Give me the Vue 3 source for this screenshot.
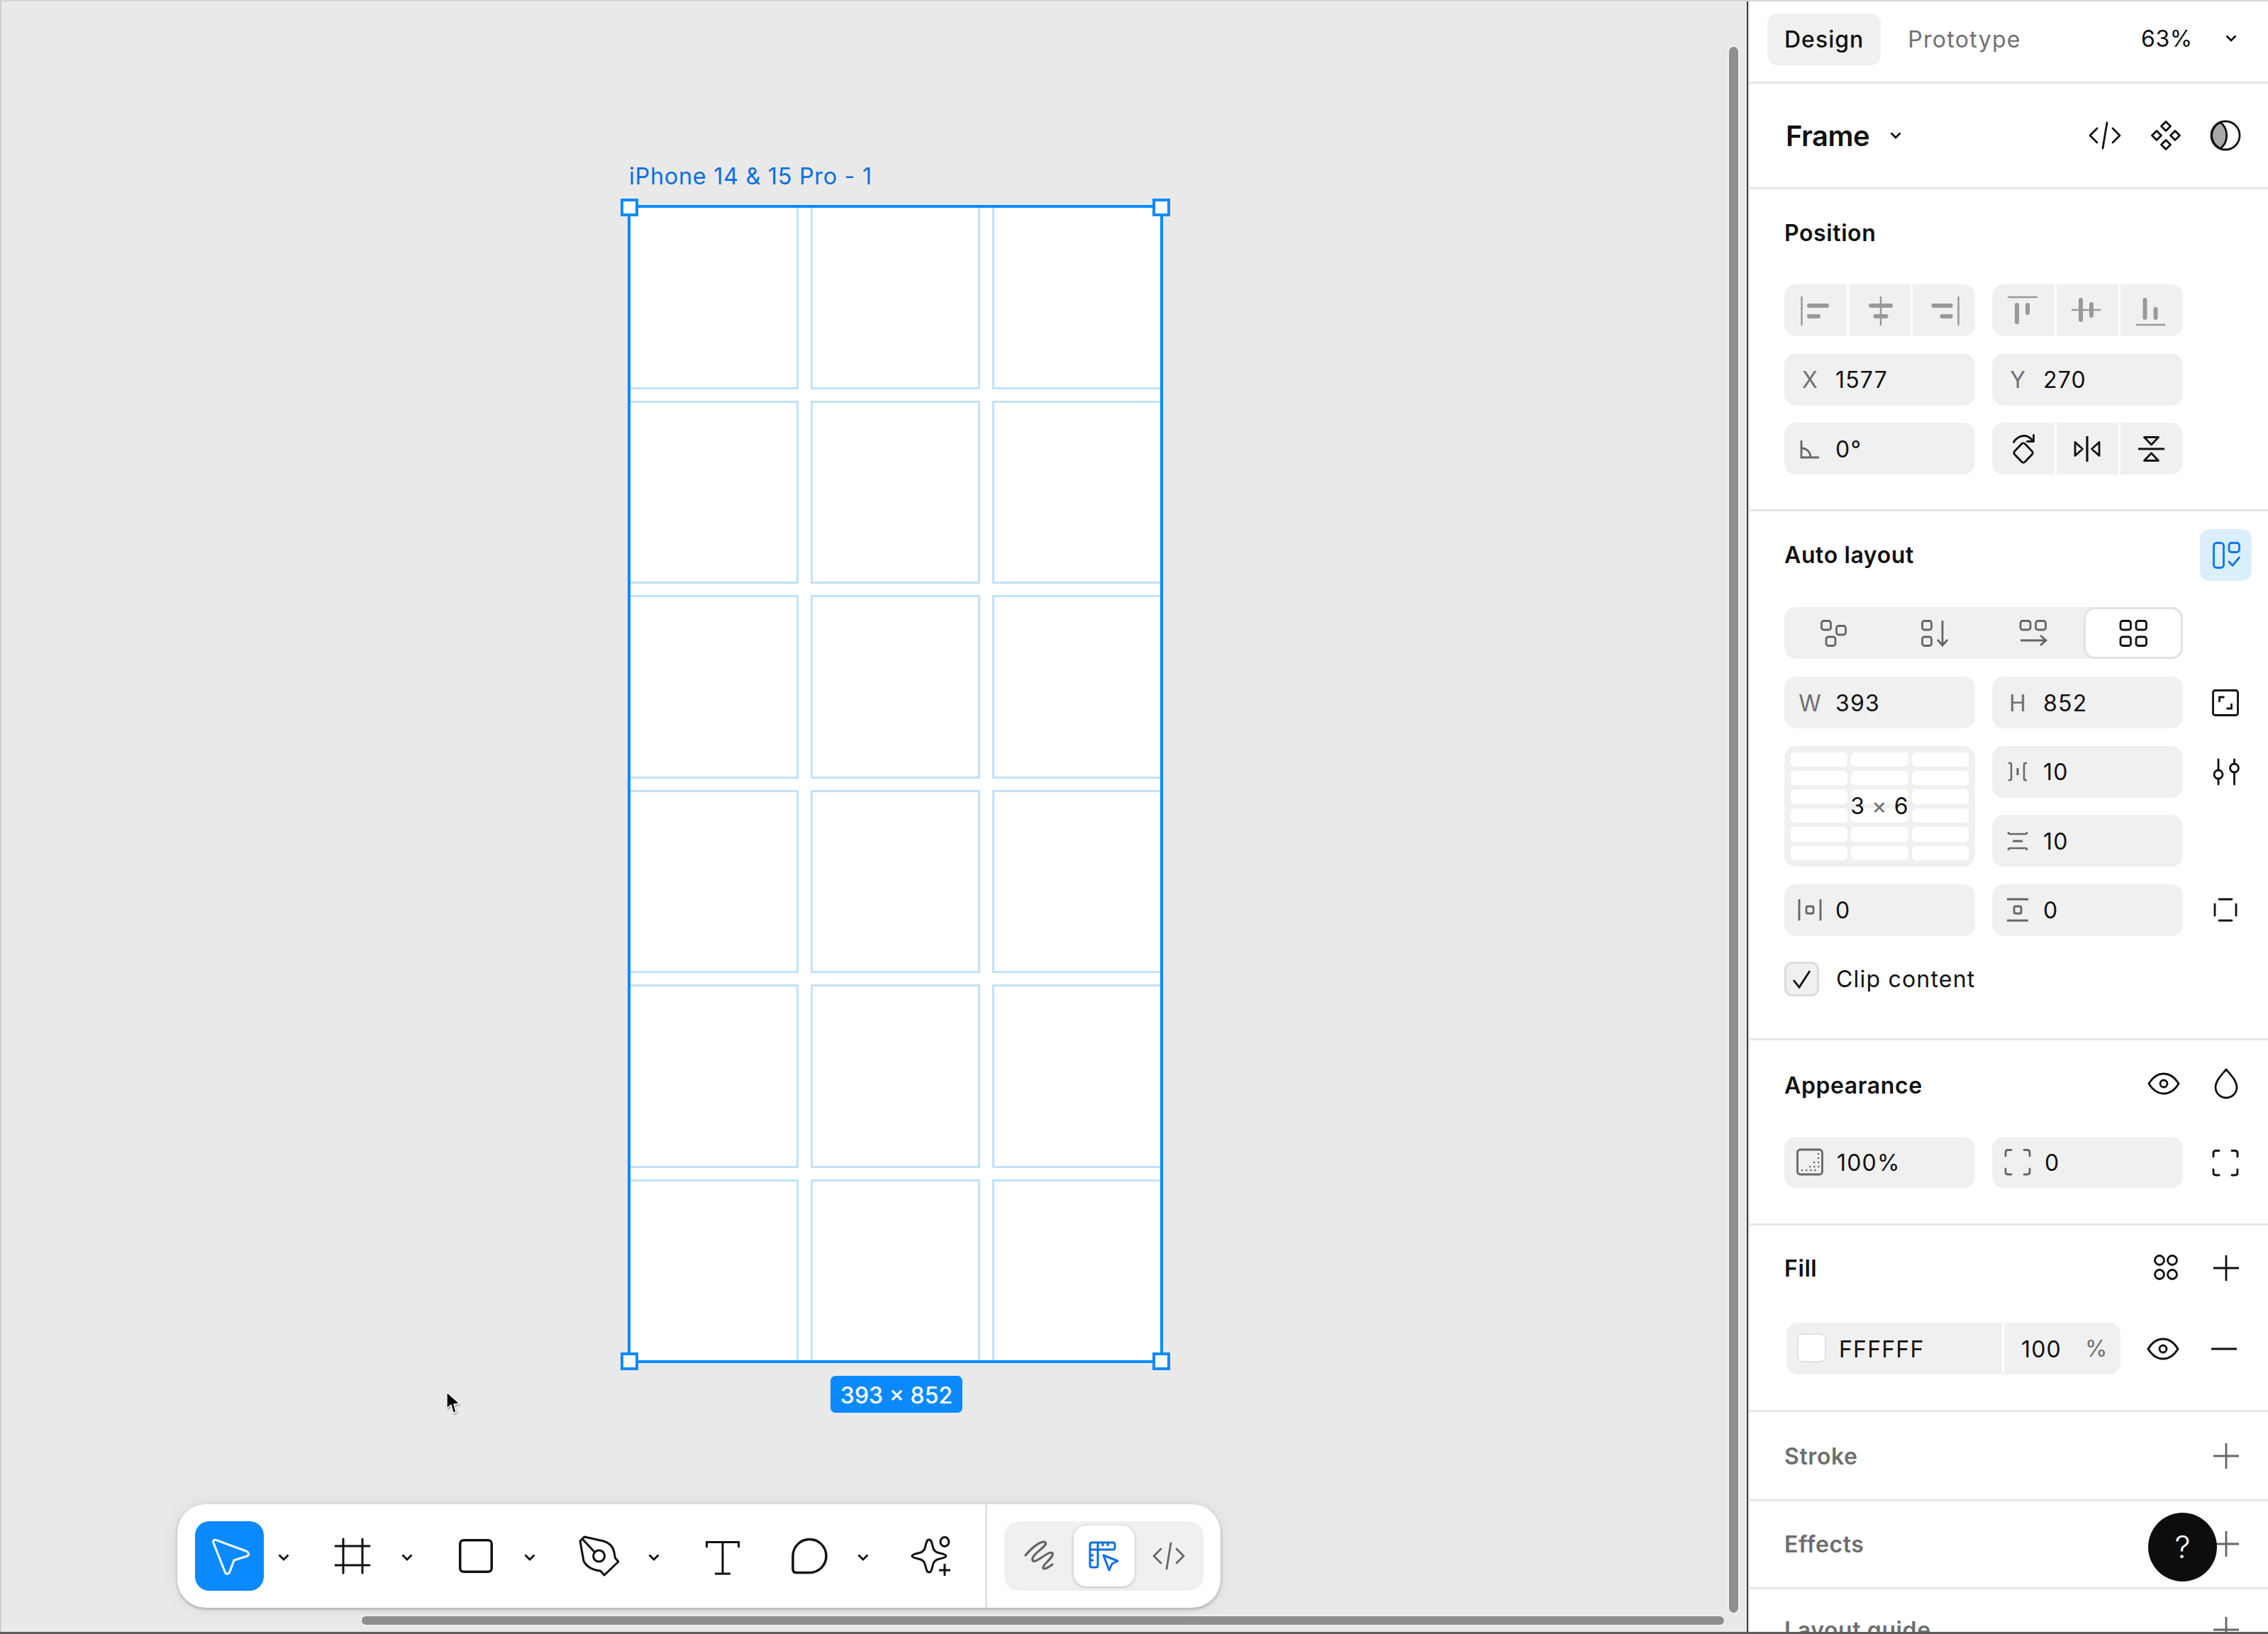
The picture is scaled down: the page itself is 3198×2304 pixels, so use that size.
<script setup>
const cells = Array.from({ length: 18 }, (_, i) => i)
</script>

<template>
  <div class="page">
    <main class="canvas">
      <div class="frame">
        <div class="frame-label">iPhone 14 &amp; 15 Pro - 1</div>
        <div class="frame-grid">
          <div v-for="c in cells" :key="c" class="frame-cell"></div>
        </div>
        <i class="handle tl"></i><i class="handle tr"></i><i class="handle bl"></i><i class="handle br"></i>
        <div class="badge">393 × 852</div>
      </div>

      <svg class="mouse" viewBox="0 0 24 34" width="24" height="34">
        <path d="M2 2 L2 25 L8 20 L11 31 L15 30 L12 19 L20 18 Z" fill="#000" stroke="#fff" stroke-width="1.4" stroke-linejoin="round" />
      </svg>

      <div class="scroll-v"></div>
      <div class="scroll-h"></div>

      <div class="toolbar">
        <div class="tools">
          <button class="tool-active">
            <svg viewBox="0 0 60 60" width="60" height="60" fill="none" stroke="#fff" stroke-width="3" stroke-linejoin="round">
              <path d="M6.8 11 Q6 6 11 7.6 L54 23.5 Q59 27 55 30 L36 36 L29.6 53 Q26.5 57 23.8 54 Z" />
            </svg>
          </button>
          <svg class="tb-chev" viewBox="0 0 16 10" width="16" height="10"><path d="M1.5 1.5 L8 8 L14.5 1.5" /></svg>
          <svg class="tb-ic ic-frame" viewBox="0 0 48 48" width="48" height="48" fill="none" stroke="#111" stroke-width="3" stroke-linecap="round">
            <path d="M11 0 V48 M38 0 V48 M0 10 H48 M0 37 H48" />
          </svg>
          <svg class="tb-chev c2" viewBox="0 0 16 10" width="16" height="10"><path d="M1.5 1.5 L8 8 L14.5 1.5" /></svg>
          <svg class="tb-ic ic-rect" viewBox="0 0 48 48" width="48" height="48" fill="none" stroke="#111" stroke-width="3.5">
            <rect x="1.75" y="1.75" width="44.5" height="44.5" rx="5" />
          </svg>
          <svg class="tb-chev c3" viewBox="0 0 16 10" width="16" height="10"><path d="M1.5 1.5 L8 8 L14.5 1.5" /></svg>
          <svg class="tb-ic ic-pen" viewBox="0 0 60 60" width="60" height="60" fill="none" stroke="#111" stroke-width="3" stroke-linejoin="round">
            <path d="M9 2 L36 8 Q49 12 51 24 L52.5 32 L57 37 L37 56 L31.6 50 Q14 48 8 36 L3 8 Z" />
            <path d="M7 6 L23 23" />
            <circle cx="29.6" cy="29" r="8" />
          </svg>
          <svg class="tb-chev c4" viewBox="0 0 16 10" width="16" height="10"><path d="M1.5 1.5 L8 8 L14.5 1.5" /></svg>
          <svg class="tb-ic ic-text" viewBox="0 0 48 48" width="48" height="48" fill="none" stroke="#111" stroke-width="3">
            <path d="M1.5 9 V1.5 H46.5 V9 M24 1.5 V46 M13 46 H35" />
          </svg>
          <svg class="tb-ic ic-comment" viewBox="0 0 52 52" width="52" height="52" fill="none" stroke="#111" stroke-width="3.5">
            <path d="M3 26 A23.5 23.5 0 1 1 26.5 49.5 H8 Q3 49.5 3 44.5 Z" />
          </svg>
          <svg class="tb-chev c5" viewBox="0 0 16 10" width="16" height="10"><path d="M1.5 1.5 L8 8 L14.5 1.5" /></svg>
          <svg class="tb-ic ic-spark" viewBox="0 0 60 60" width="60" height="60" fill="none" stroke="#111" stroke-width="3">
            <path d="M28 6 C31 6 32 10 33 15 C34 21 37 24 43 25 C48 26 52 27 52 29 C52 31 48 32 43 33 C37 34 34 37 33 43 C32 48 31 52 28 52 C25 52 24 48 23 43 C22 37 19 34 13 33 C8 32 4 31 4 29 C4 27 8 26 13 25 C19 24 22 21 23 15 C24 10 25 6 28 6 Z" />
            <ellipse cx="50" cy="9" rx="6" ry="6.5" />
            <path d="M50 40 V57 M42 49 H58" />
          </svg>
        </div>
        <div class="modes">
          <span class="mode">
            <svg viewBox="0 0 48 48" width="48" height="48" fill="none" stroke="#666" stroke-width="3.2" stroke-linecap="round">
              <path d="M5 23 C14 12 28 1 33 5 C38 9 12 22 15 30 C18 37 38 15 43 20 C46 25 28 37 30 41 C32 44 40 38 43 36" />
            </svg>
          </span>
          <span class="mode mode-on">
            <svg viewBox="0 0 48 48" width="48" height="48" fill="none" stroke="#0b6fe3" stroke-width="3" stroke-linejoin="round">
              <path d="M4 8 Q4 5 7 5 H36 Q39 5 39 8 V12 Q39 15 36 15 H15 V37 Q15 40 12 40 H7 Q4 40 4 37 Z" />
              <path d="M4 15 H15 V5 M22 5 V10 M29 5 V10 M4 23 H9 M4 30 H9" />
              <path d="M23 23 L43 31 L35 35 L31 44 Z" fill="#fff" />
            </svg>
          </span>
          <span class="mode">
            <svg viewBox="0 0 48 48" width="48" height="48" fill="none" stroke="#666" stroke-width="2.8" stroke-linecap="round" stroke-linejoin="round">
              <path d="M13 14 L3 24 L13 34 M35 14 L45 24 L35 34 M27 6 L21 42" />
            </svg>
          </span>
        </div>
      </div>
    </main>

    <aside class="panel">
      <section class="sec tabs">
        <span class="tab tab-on">Design</span>
        <span class="tab">Prototype</span>
        <span class="zoom-val">63%</span>
        <svg class="chev" viewBox="0 0 16 10" width="16" height="10"><path d="M1.5 1.5 L8 8 L14.5 1.5" /></svg>
      </section>

      <section class="sec header">
        <span class="frame-name">Frame</span>
        <svg class="chev" viewBox="0 0 16 10" width="16" height="10"><path d="M1.5 1.5 L8 8 L14.5 1.5" /></svg>
        <span class="spacer"></span>
        <svg viewBox="0 0 48 48" width="48" height="48" fill="none" stroke="#111" stroke-width="2.8" stroke-linecap="round" stroke-linejoin="round">
          <path d="M13 14 L3 24 L13 34 M35 14 L45 24 L35 34 M27 6 L21 42" />
        </svg>
        <svg viewBox="0 0 48 48" width="48" height="48" fill="none" stroke="#111" stroke-width="2.8" stroke-linejoin="round">
          <path d="M24 4.5 L30.5 11 L24 17.5 L17.5 11 Z M24 30.5 L30.5 37 L24 43.500 L17.5 37 Z M11 17.5 L17.500 24 L11 30.5 L4.500 24 Z M37 17.5 L43.500 24 L37 30.5 L30.500 24 Z" />
        </svg>
        <svg viewBox="0 0 48 48" width="48" height="48" fill="none" stroke="#111" stroke-width="2.8">
          <path d="M17 5.5 A20 20 0 0 0 17 42.5 A24 24 0 0 0 17 5.5 Z" fill="#a8a8a8" />
          <circle cx="24" cy="24" r="20" />
        </svg>
      </section>

      <section class="sec position">
        <div class="head"><h3>Position</h3></div>
        <div class="stack">
          <div class="pair">
            <div class="btns">
              <span><svg viewBox="0 0 48 48" width="48" height="48" fill="none" stroke="#999" stroke-linecap="round">
                <path d="M4.5 5 V44" stroke-width="2.5" /><path d="M15 17 H40 M15 32 H28" stroke-width="6" />
              </svg></span>
              <span><svg viewBox="0 0 48 48" width="48" height="48" fill="none" stroke="#999" stroke-linecap="round">
                <path d="M26 5 V44" stroke-width="2.5" /><path d="M12 17 H40 M18.5 32 H33.5" stroke-width="6" />
              </svg></span>
              <span><svg viewBox="0 0 48 48" width="48" height="48" fill="none" stroke="#999" stroke-linecap="round">
                <path d="M44.5 5 V44" stroke-width="2.5" /><path d="M9.5 17 H33.5 M21.5 32 H33.5" stroke-width="6" />
              </svg></span>
            </div>
            <div class="btns">
              <span><svg viewBox="0 0 48 48" width="48" height="48" fill="none" stroke="#999" stroke-linecap="round">
                <path d="M3 5 H43" stroke-width="2.5" /><path d="M15 16 V40 M30 16 V27" stroke-width="6" />
              </svg></span>
              <span><svg viewBox="0 0 48 48" width="48" height="48" fill="none" stroke="#999" stroke-linecap="round">
                <path d="M3 23 H42" stroke-width="2.5" /><path d="M15 9 V37 M30 15 V31" stroke-width="6" />
              </svg></span>
              <span><svg viewBox="0 0 48 48" width="48" height="48" fill="none" stroke="#999" stroke-linecap="round">
                <path d="M3 44 H42" stroke-width="2.5" /><path d="M14.5 9 V34 M29.5 22 V34" stroke-width="6" />
              </svg></span>
            </div>
          </div>
          <div class="pair">
            <div class="field"><span class="lb">X</span><span class="val">1577</span></div>
            <div class="field"><span class="lb">Y</span><span class="val">270</span></div>
          </div>
          <div class="pair">
            <div class="field">
              <span class="lb"><svg viewBox="0 0 48 48" width="48" height="48" fill="none" stroke="#666" stroke-width="2.8">
                <path d="M12 12 V36 H37 M12 23 C20 23 25 29 25 36" />
              </svg></span>
              <span class="val">0°</span>
            </div>
            <div class="btns">
              <span><svg viewBox="0 0 48 48" width="48" height="48" fill="none" stroke="#111" stroke-width="2.8" stroke-linecap="round" stroke-linejoin="round">
                <path d="M24 16 Q25 15.5 26 16.500 L36.500 27.500 Q38 29.500 36.500 31.500 L26 42.500 Q24 44 22 42.500 L11.500 31.500 Q10 29.500 11.500 27.500 L22 16.500 Q23 15.500 24 16 Z" />
                <path d="M10.500 14.500 C14 8 26 0 36 11 M38.500 4.500 V13.500 H29.500" />
              </svg></span>
              <span><svg viewBox="0 0 48 48" width="48" height="48" fill="none" stroke="#111" stroke-width="2.8" stroke-linejoin="round">
                <path d="M24 6 V42" stroke-width="3.2" /><path d="M7 14.500 L17.500 24 L7 33.500 Z M41 14.500 L30.500 24 L41 33.500 Z" />
              </svg></span>
              <span><svg viewBox="0 0 48 48" width="48" height="48" fill="none" stroke="#111" stroke-width="2.8" stroke-linejoin="round">
                <path d="M5 24 H42" stroke-width="3.200" /><path d="M13.500 7.500 L33.500 7.500 L23.500 18 Z M13.500 40.500 L33.500 40.500 L23.500 30 Z" />
              </svg></span>
            </div>
          </div>
        </div>
      </section>

      <section class="sec auto">
        <div class="head head-auto">
          <h3>Auto layout</h3>
          <span class="blue-btn">
            <svg viewBox="0 0 48 48" width="48" height="48" fill="none" stroke="#0b78ea" stroke-width="2.8" stroke-linecap="round" stroke-linejoin="round">
              <rect x="6.500" y="6.500" width="14" height="35" rx="4" />
              <rect x="28" y="6.500" width="14.500" height="13" rx="3.500" />
              <path d="M28 33 L33 38.500 L42.500 27" />
            </svg>
          </span>
        </div>
        <div class="seg">
          <span><svg viewBox="0 0 48 48" width="48" height="48" fill="none" stroke="#666" stroke-width="2.800">
            <rect x="6.500" y="6.500" width="13" height="12.500" rx="3" /><rect x="27.500" y="13.500" width="13" height="12.500" rx="3" /><rect x="13" y="29" width="13" height="12.500" rx="3" />
          </svg></span>
          <span><svg viewBox="0 0 48 48" width="48" height="48" fill="none" stroke="#666" stroke-width="2.800">
            <rect x="7.500" y="6.500" width="13" height="12.500" rx="3" /><rect x="7.500" y="29" width="13" height="12.500" rx="3" /><path d="M36 6 V41 M29 33 L36 41 L43 33" />
          </svg></span>
          <span><svg viewBox="0 0 48 48" width="48" height="48" fill="none" stroke="#666" stroke-width="2.800">
            <rect x="6" y="6.500" width="14" height="12.500" rx="3" /><rect x="27.500" y="6.500" width="14" height="12.500" rx="3" /><path d="M6 34 H42 M34 27 L42 34 L34 41" />
          </svg></span>
          <span class="seg-on"><svg viewBox="0 0 48 48" width="48" height="48" fill="none" stroke="#111" stroke-width="2.800">
            <rect x="6" y="6.500" width="14.500" height="12.500" rx="3" /><rect x="28" y="6.500" width="14.500" height="12.500" rx="3" /><rect x="6" y="29" width="14.500" height="12.500" rx="3" /><rect x="28" y="29" width="14.500" height="12.500" rx="3" />
          </svg></span>
        </div>
        <div class="auto-grid">
          <div class="field"><span class="lb">W</span><span class="val">393</span></div>
          <div class="field"><span class="lb">H</span><span class="val">852</span></div>
          <svg class="side" viewBox="0 0 48 48" width="48" height="48" fill="none" stroke="#111" stroke-width="2.800">
            <rect x="6.500" y="6.500" width="35" height="35" rx="3" />
            <path d="M15.500 23 V16 H22.500 M32.500 25 V32 H25.500" />
          </svg>

          <div class="mini">
            <i v-for="c in cells" :key="c"></i>
            <span class="mini-label">3 <em>×</em> 6</span>
          </div>
          <div class="field"><span class="lb">
            <svg viewBox="0 0 48 48" width="48" height="48" fill="none" stroke="#666" stroke-width="2.500">
              <path d="M11 12 H13 Q15 12 15 14 V34 Q15 36 13 36 H11 M37 12 H35 Q33 12 33 14 V34 Q33 36 35 36 H37" /><path d="M24 19 V29" stroke-width="3" />
            </svg>
          </span><span class="val">10</span></div>
          <svg class="side" viewBox="0 0 48 48" width="48" height="48" fill="none" stroke="#111" stroke-width="2.800" stroke-linecap="round">
            <path d="M14 7 V22 M14 34 V42 M36.500 7 V13 M36.500 25 V42" />
            <circle cx="14" cy="28" r="6" /><circle cx="36.500" cy="19" r="6" />
          </svg>

          <div class="field"><span class="lb">
            <svg viewBox="0 0 48 48" width="48" height="48" fill="none" stroke="#666" stroke-width="2.500">
              <path d="M11 11 V12 Q11 14 13 14 H35 Q37 14 37 12 V11 M11 37 V36 Q11 34 13 34 H35 Q37 34 37 36 V37" /><path d="M17 24 H31" stroke-width="3" />
            </svg>
          </span><span class="val">10</span></div>
          <span class="side-empty"></span>

          <div class="field"><span class="lb">
            <svg viewBox="0 0 48 48" width="48" height="48" fill="none" stroke="#666" stroke-width="2.800">
              <path d="M9 9 V39 M39 9 V39" /><rect x="19" y="19" width="10" height="10" rx="2" />
            </svg>
          </span><span class="val">0</span></div>
          <div class="field"><span class="lb">
            <svg viewBox="0 0 48 48" width="48" height="48" fill="none" stroke="#666" stroke-width="2.800">
              <path d="M9 9 H39 M9 39 H39" /><rect x="19" y="19" width="10" height="10" rx="2" />
            </svg>
          </span><span class="val">0</span></div>
          <svg class="side" viewBox="0 0 48 48" width="48" height="48" fill="none" stroke="#111" stroke-width="2.800" stroke-linecap="round">
            <path d="M15 9 H33 M15 39 H33 M9 16 V32 M39 16 V32" />
          </svg>
        </div>
        <label class="clip">
          <span class="check">
            <svg viewBox="0 0 44 44" width="44" height="44" fill="none" stroke="#111" stroke-width="2.800"><path d="M10 23 L18 33 L33 10" /></svg>
          </span>
          Clip content
        </label>
      </section>

      <section class="sec appearance">
        <div class="head">
          <h3>Appearance</h3>
          <div class="head-ics">
            <svg viewBox="0 0 48 48" width="48" height="48" fill="none" stroke="#111" stroke-width="2.800">
              <path d="M3 24 C9 14 16 10 24 10 C32 10 39 14 45 24 C39 34 32 38 24 38 C16 38 9 34 3 24 Z" /><circle cx="24" cy="24" r="5" />
            </svg>
            <svg viewBox="0 0 48 48" width="48" height="48" fill="none" stroke="#111" stroke-width="2.800" stroke-linejoin="round">
              <path d="M24 4 C18 11 9 20 9 29 A15 15 0 0 0 39 29 C39 20 30 11 24 4 Z" />
            </svg>
          </div>
        </div>
        <div class="auto-grid">
          <div class="field"><span class="lb">
            <svg viewBox="0 0 48 48" width="48" height="48" fill="none" stroke="#666" stroke-width="2.800">
              <rect x="6.500" y="6" width="35" height="35" rx="4" />
              <path stroke-width="2.500" stroke-linecap="round" stroke-dasharray="0.1 6" d="M13 35 H37 M24 30 H37 M30 24 H37 M36 18 H37 M36 12 H37" />
            </svg>
          </span><span class="val">100%</span></div>
          <div class="field"><span class="lb">
            <svg viewBox="0 0 48 48" width="48" height="48" fill="none" stroke="#666" stroke-width="2.800" stroke-linecap="round">
              <path d="M7 15 V10 Q7 6.500 10.500 6.500 H15 M33 6.500 H37.500 Q41 6.500 41 10 V15 M7 33 V37.500 Q7 41 10.500 41 H15 M33 41 H37.500 Q41 41 41 37.500 V33" />
            </svg>
          </span><span class="val">0</span></div>
          <svg class="side" viewBox="0 0 48 48" width="48" height="48" fill="none" stroke="#111" stroke-width="2.800" stroke-linecap="round">
            <path d="M7 15 V10 Q7 6.500 10.500 6.500 H15 M33 6.500 H37.500 Q41 6.500 41 10 V15 M7 33 V37.500 Q7 41 10.500 41 H15 M33 41 H37.500 Q41 41 41 37.500 V33" />
          </svg>
        </div>
      </section>

      <section class="sec fill">
        <div class="head">
          <h3>Fill</h3>
          <div class="head-ics ics-fill">
            <svg viewBox="0 0 48 48" width="48" height="48" fill="none" stroke="#111" stroke-width="2.800">
              <circle cx="15" cy="13" r="6.500" /><circle cx="33" cy="13" r="6.500" /><circle cx="15" cy="33" r="6.500" /><circle cx="33" cy="33" r="6.500" />
            </svg>
            <svg viewBox="0 0 48 48" width="48" height="48" fill="none" stroke="#111" stroke-width="2.800">
              <path d="M24 6 V42 M6 24 H42" />
            </svg>
          </div>
        </div>
        <div class="fill-row">
          <div class="fill-field">
            <span class="swatch"></span>
            <span class="val hex">FFFFFF</span>
            <span class="fill-sep"></span>
            <span class="val pct">100</span>
            <span class="pct-sign">%</span>
          </div>
          <svg viewBox="0 0 48 48" width="48" height="48" fill="none" stroke="#111" stroke-width="2.800">
            <path d="M3 24 C9 14 16 10 24 10 C32 10 39 14 45 24 C39 34 32 38 24 38 C16 38 9 34 3 24 Z" /><circle cx="24" cy="24" r="5" />
          </svg>
          <svg viewBox="0 0 48 48" width="48" height="48" fill="none" stroke="#111" stroke-width="2.800">
            <path d="M4 24 H40" />
          </svg>
        </div>
      </section>

      <section class="sec stroke">
        <div class="head muted">
          <h3>Stroke</h3>
          <svg viewBox="0 0 48 48" width="48" height="48" fill="none" stroke="#666" stroke-width="2.800"><path d="M24 6 V42 M6 24 H42" /></svg>
        </div>
      </section>

      <section class="sec effects">
        <div class="head muted">
          <h3>Effects</h3>
          <svg viewBox="0 0 48 48" width="48" height="48" fill="none" stroke="#666" stroke-width="2.800"><path d="M24 6 V42 M6 24 H42" /></svg>
        </div>
      </section>

      <section class="guide">
        <div class="head muted">
          <h3>Layout guide</h3>
          <svg viewBox="0 0 48 48" width="48" height="48" fill="none" stroke="#666" stroke-width="2.800"><path d="M24 6 V42 M6 24 H42" /></svg>
        </div>
      </section>

      <div class="help">?</div>
    </aside>
  </div>
</template>

<style>
html, body { margin: 0; background: #e9e9e9; }
</style>

<style scoped>
.page {
  position: relative;
  width: 3198px;
  height: 2304px;
  overflow: hidden;
  display: flex;
  font-family: Inter, "Noto Sans", sans-serif;
  color: #111;
  font-size: 32px;
  letter-spacing: 1.2px;
}
.page::before {
  content: "";
  position: absolute;
  inset: 0 0 auto 0;
  height: 2px;
  background: #d6d6d6;
  z-index: 9;
}
.page::after {
  content: "";
  position: absolute;
  inset: auto 0 0 0;
  height: 3px;
  background: #5c5c5c;
  z-index: 9;
}
svg { display: block; flex: none; overflow: visible; }

/* canvas */
.canvas {
  position: relative;
  width: 2465px;
  flex: none;
  box-sizing: border-box;
  background: #e9e9e9;
  border-right: 2px solid #3c3c3c;
  box-shadow: inset 2px 0 0 #cfcfcf;
}
.frame {
  position: absolute;
  left: 885px;
  top: 289px;
  width: 755px;
  height: 1633px;
  background: #fff;
}
.frame::before {
  content: "";
  position: absolute;
  inset: 0;
  border: 4px solid #0b8aff;
  z-index: 1;
}
.frame-label {
  position: absolute;
  left: 2px;
  top: -60px;
  color: #0a6fe0;
  font-size: 32.5px;
  letter-spacing: 0.65px;
  line-height: 40px;
  white-space: nowrap;
}
.frame-grid {
  position: absolute;
  inset: 1px;
  display: grid;
  grid-template-columns: repeat(3, 1fr);
  grid-template-rows: repeat(6, 1fr);
  gap: 16px 17px;
}
.frame-cell {
  border: 3px solid #c0e2fa;
}
.frame-cell:nth-child(3n + 1) { border-left: 0; }
.frame-cell:nth-child(3n) { border-right: 0; }
.frame-cell:nth-child(-n + 3) { border-top: 0; }
.frame-cell:nth-last-child(-n + 3) { border-bottom: 0; }
.handle {
  position: absolute;
  z-index: 2;
  width: 25px;
  height: 25px;
  box-sizing: border-box;
  border: 4px solid #0b8aff;
  background: #fff;
}
.tl { left: -10px; top: -9px; }
.tr { right: -10px; top: -9px; }
.bl { left: -10px; bottom: -10px; }
.br { right: -10px; bottom: -10px; }
.badge {
  position: absolute;
  left: 286px;
  top: 1651px;
  width: 186px;
  height: 52px;
  border-radius: 7px;
  background: #0b8aff;
  color: #fff;
  font-weight: 500;
  font-size: 32px;
  letter-spacing: 0;
  line-height: 56px;
  text-align: center;
  white-space: nowrap;
}
.mouse {
  position: absolute;
  left: 628px;
  top: 1961px;
  filter: drop-shadow(1px 2px 1px rgba(0, 0, 0, 0.3));
}
.scroll-v {
  position: absolute;
  left: 2438px;
  top: 66px;
  width: 13px;
  height: 2208px;
  border-radius: 7px;
  background: #8f8f8f;
  box-shadow: 0 0 0 2px #f0f0f0;
}
.scroll-h {
  position: absolute;
  left: 510px;
  top: 2279px;
  width: 1921px;
  height: 12px;
  border-radius: 6px;
  background: #8f8f8f;
  box-shadow: 0 0 0 2px #f0f0f0;
}

/* toolbar */
.toolbar {
  position: absolute;
  left: 250px;
  top: 2121px;
  width: 1471px;
  height: 146px;
  border-radius: 40px;
  background: #fff;
  box-shadow: 0 2px 4px rgba(0, 0, 0, 0.25), 0 0 24px rgba(0, 0, 0, 0.08);
  display: flex;
}
.tools {
  position: relative;
  width: 1139px;
  border-right: 3px solid #e3e3e3;
}
.tool-active {
  position: absolute;
  left: 25px;
  top: 24px;
  width: 97px;
  height: 98px;
  border: 0;
  padding: 0;
  border-radius: 20px;
  background: #0b8aff;
  display: flex;
  align-items: center;
  justify-content: center;
}
.tb-ic { position: absolute; }
.ic-frame { left: 223px; top: 49px; }
.ic-rect { left: 397px; top: 49px; }
.ic-pen { left: 565px; top: 44px; }
.ic-text { left: 745px; top: 52px; }
.ic-comment { left: 865px; top: 47px; }
.ic-spark { left: 1032px; top: 44px; }
.tb-chev {
  position: absolute;
  top: 70px;
  left: 142px;
  fill: none;
  stroke: #111;
  stroke-width: 2.8;
}
.c2 { left: 316px; }
.c3 { left: 489px; }
.c4 { left: 664px; }
.c5 { left: 959px; }
.modes {
  position: absolute;
  left: 1166px;
  top: 24px;
  width: 281px;
  height: 98px;
  border-radius: 20px;
  background: #f0f0f0;
  display: flex;
  align-items: center;
  justify-content: center;
}
.mode {
  width: 97px;
  height: 86px;
  display: flex;
  align-items: center;
  justify-content: center;
}
.mode-on {
  width: 86px;
  border-radius: 18px;
  background: #fff;
  box-shadow: 0 1px 4px rgba(0, 0, 0, 0.25);
}

/* panel */
.panel {
  position: relative;
  width: 733px;
  flex: none;
  box-sizing: border-box;
  background: #fff;
  border-left: 2px solid #e6e6e6;
  display: flex;
  flex-direction: column;
}
.sec {
  box-sizing: border-box;
  border-bottom: 3px solid #e6e6e6;
  padding-left: 49px;
  flex: none;
}
.tabs {
  height: 118px;
  display: flex;
  align-items: center;
  padding-bottom: 5px;
  padding-left: 25px;
}
.tab {
  height: 73px;
  padding: 0 24px;
  border-radius: 14px;
  line-height: 73px;
  color: #707070;
  margin-right: 14px;
  letter-spacing: 1.3px;
}
.tab-on {
  background: #f0f0f0;
  color: #111;
  font-weight: 500;
  letter-spacing: 1px;
}
.zoom-val { position: absolute; left: 552px; top: 35px; line-height: 40px; letter-spacing: 0.6px; }
.tabs .chev { position: absolute; left: 671px; top: 49px; }
.chev { fill: none; stroke: #111; stroke-width: 2.8; }
.header {
  height: 149px;
  display: flex;
  align-items: center;
  padding-right: 36px;
  padding-left: 51px;
}
.header > svg + svg { margin-left: 38px; }
.header > svg:last-child { margin-left: 36px; }
.header .chev { margin-left: 29px; }
.frame-name { font-size: 40px; font-weight: 600; letter-spacing: -0.5px; }
.spacer { flex: 1; }
.header .spacer + svg { margin-left: 0; }
.position { height: 454px; padding-top: 37px; }
.head {
  height: 48px;
  display: flex;
  align-items: center;
  justify-content: space-between;
  padding-right: 35px;
}
h3 { margin: 0; font-size: 32px; font-weight: 600; letter-spacing: 0.6px; }
.muted h3 { color: #6e6e6e; }
.head-ics { display: flex; gap: 40px; }
.ics-fill { gap: 37px; }
.appearance .head-ics { margin-bottom: 4px; }
.position .head { margin-bottom: 49px; }
.stack { display: flex; flex-direction: column; gap: 24.500px; }
.pair { display: grid; grid-template-columns: 269px 269px; gap: 24px; }
.btns {
  display: grid;
  grid-template-columns: repeat(3, 1fr);
  gap: 3px;
  height: 73px;
  border-radius: 16px;
  overflow: hidden;
}
.btns > span {
  background: #f0f0f0;
  display: flex;
  align-items: center;
  justify-content: center;
}
.field {
  height: 73px;
  border-radius: 16px;
  background: #f0f0f0;
  display: flex;
  align-items: center;
  padding-left: 12px;
}
.lb {
  width: 48px;
  height: 48px;
  flex: none;
  margin-right: 12px;
  line-height: 50px;
  text-align: center;
  letter-spacing: 0;
  color: #707070;
}
.val { line-height: 40px; padding-top: 2px; white-space: nowrap; }

.auto { height: 746px; padding-top: 25px; }
.head-auto { height: 73px; margin-bottom: 37px; padding-right: 23px; }
.blue-btn {
  width: 73px;
  height: 73px;
  border-radius: 14px;
  background: #dbeefc;
  display: flex;
  align-items: center;
  justify-content: center;
}
.seg {
  width: 562px;
  height: 73px;
  box-sizing: border-box;
  border-radius: 16px;
  background: #f0f0f0;
  display: grid;
  grid-template-columns: repeat(4, 1fr);
  margin-bottom: 25px;
}
.seg > span { display: flex; align-items: center; justify-content: center; }
.seg-on {
  background: #fff;
  border: 3px solid #e2e2e2;
  border-radius: 16px;
}
.auto-grid {
  display: grid;
  grid-template-columns: 269px 269px 48px;
  grid-auto-rows: 73px;
  column-gap: 24px;
  row-gap: 24.500px;
}
.side { margin-left: 12px; align-self: center; }
.mini {
  grid-row: span 2;
  position: relative;
  box-sizing: border-box;
  padding: 9px;
  border-radius: 16px;
  background: #f0f0f0;
  display: grid;
  grid-template-columns: repeat(3, 1fr);
  grid-template-rows: repeat(6, 1fr);
  gap: 6px 5px;
}
.mini i { background: #fff; border-radius: 6px; }
.mini-label {
  position: absolute;
  inset: 0;
  display: flex;
  align-items: center;
  justify-content: center;
  gap: 9px;
  white-space: nowrap;
}
.mini-label em { font-style: normal; color: #707070; }
.clip {
  display: flex;
  align-items: center;
  height: 48px;
  margin-top: 37px;
  gap: 24px;
}
.check {
  width: 49px;
  height: 49px;
  box-sizing: border-box;
  border: 3px solid #dcdcdc;
  border-radius: 11px;
  background: #f0f0f0;
  display: flex;
  align-items: center;
  justify-content: center;
}
.appearance { height: 261px; padding-top: 39px; }
.appearance .head { margin-bottom: 49px; }
.appearance .lb { margin-right: 14px; }
.appearance .field { height: 72px; }
.fill { height: 263px; padding-top: 36px; }
.fill .head { margin-bottom: 53px; }
.fill-row { display: flex; align-items: center; padding-left: 3px; }
.fill-row > svg:nth-of-type(1) { margin-left: 36px; }
.fill-row > svg:nth-of-type(2) { margin-left: 40px; }
.fill-field {
  width: 471px;
  height: 73px;
  border-radius: 16px;
  background: #f0f0f0;
  display: flex;
  align-items: center;
  position: relative;
}
.swatch {
  position: absolute;
  left: 15px;
  top: 15px;
  width: 41px;
  height: 41px;
  box-sizing: border-box;
  border-radius: 8px;
  background: #fff;
  border: 2px solid #e2e2e2;
}
.hex { position: absolute; left: 74px; }
.fill-sep {
  position: absolute;
  left: 304px;
  top: 2px;
  bottom: 2px;
  width: 3px;
  background: #fff;
}
.pct { position: absolute; left: 331px; }
.pct-sign { position: absolute; left: 421px; color: #707070; line-height: 40px; }
.stroke { height: 126px; padding-top: 38px; }
.effects { height: 124px; padding-top: 36px; }
.guide { padding: 33px 0 0 49px; }
.help {
  position: absolute;
  left: 562px;
  top: 2133px;
  width: 97px;
  height: 97px;
  border-radius: 50%;
  background: #0d0d0d;
  color: #fff;
  font-size: 44px;
  font-weight: 300;
  letter-spacing: 0;
  line-height: 97px;
  text-align: center;
}
</style>
